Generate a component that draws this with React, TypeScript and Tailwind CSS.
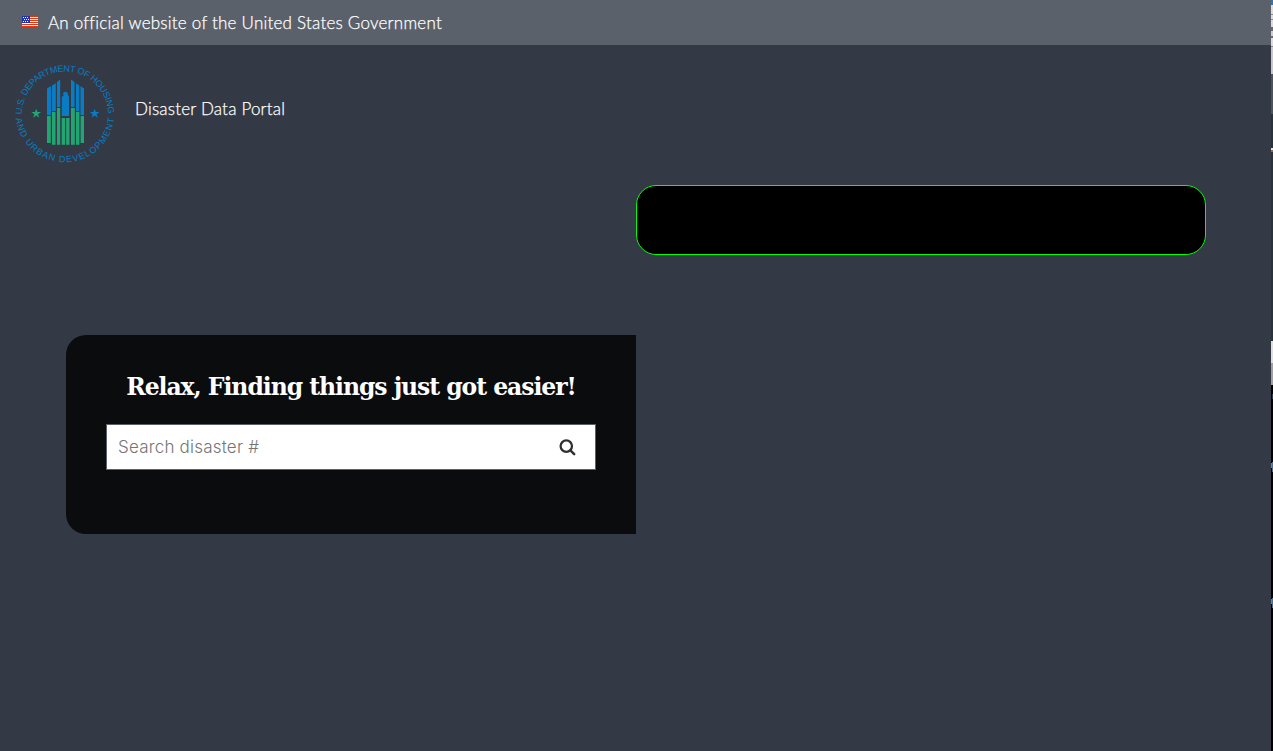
import React from "react";

const BLUE = "#0a7cc4";
const GREEN = "#21a573";
const STAR = "M0 -5 L1.25 -1.5 L5 -1.5 L2 0.7 L3.1 4.3 L0 2.1 L-3.1 4.3 L-2 0.7 L-5 -1.5 L-1.25 -1.5 Z";

function Flag() {
  return (
    <svg width="16" height="11" viewBox="0 0 16 11" shapeRendering="crispEdges">
      <rect width="16" height="11" fill="#fff" />
      {[0, 2, 4, 6, 8, 10].map((y) => (
        <rect key={y} y={y} width="16" height="1" fill="#e4340f" />
      ))}
      <rect width="8" height="7" fill="#1f35b5" />
      {[
        [1, 1], [3, 1], [5, 1],
        [2, 3], [4, 3], [6, 3],
        [1, 5], [3, 5], [5, 5],
      ].map(([x, y]) => (
        <rect key={`${x}-${y}`} x={x} y={y} width="1" height="1" fill="#fff" />
      ))}
    </svg>
  );
}

function Seal() {
  return (
    <svg width="104" height="104" viewBox="13 62 104 104">
      <defs>
        <path id="ring-top" d="M22 114.5 A43 43 0 0 1 108 114.5" />
        <path id="ring-bottom" d="M15.9 118.3 A49.4 49.4 0 0 0 114.1 118.3" />
      </defs>
      <g fill={BLUE} fontFamily="Liberation Sans, Arial, sans-serif" fontSize="9">
        <text textLength="134" lengthAdjust="spacing">
          <textPath href="#ring-top" textLength="134">U.S. DEPARTMENT OF HOUSING</textPath>
        </text>
        <text textLength="144" lengthAdjust="spacing">
          <textPath href="#ring-bottom" textLength="144">AND URBAN DEVELOPMENT</textPath>
        </text>
      </g>
      <g fill={BLUE}>
        <path d="M47 88.5 L51 86 V115 H47 Z" />
        <path d="M52 85.5 L55.8 83.3 V111 H52 Z" />
        <path d="M57 82 L60.2 79.5 V107 H57 Z" />
        <path d="M71 79.5 L74.5 82 V107 H71 Z" />
        <path d="M76 83.3 L79.3 85.5 V111 H76 Z" />
        <path d="M80.5 86 L84 88.5 V115 H80.5 Z" />
        <path d="M61.8 116 V97 L64.2 94.8 L62.8 94.4 C63 92.5 64.3 91.7 65.6 91.8 C67.2 92 67.8 93.4 68 95 L69 97 V116 Z" />
      </g>
      <g fill={GREEN}>
        <rect x="47" y="116" width="3.8" height="27" />
        <rect x="52" y="112" width="3.5" height="32.8" />
        <rect x="57" y="108" width="3.2" height="36.8" />
        <rect x="61.7" y="118" width="3.4" height="26.8" />
        <rect x="66.1" y="118" width="3.4" height="26.8" />
        <rect x="71" y="108" width="3.8" height="36.8" />
        <rect x="76" y="112" width="3.4" height="32.8" />
        <rect x="80.6" y="116" width="3.4" height="27" />
        <path d={STAR} transform="translate(36.2 113.5) scale(.96)" />
      </g>
      <path d={STAR} transform="translate(94.6 113.5) scale(.96)" fill={BLUE} />
    </svg>
  );
}

function EdgeStrip() {
  return (
    <div className="flex w-[2px] shrink-0 flex-col bg-black">
      <div className="h-[5px] bg-[#2f74b5]" />
      <div className="h-[9px] bg-[#dcdcdc]" />
      <div className="h-px bg-[#8c8c8c]" />
      <div className="h-[4px] bg-[#dcdcdc]" />
      <div className="h-px bg-[#8c8c8c]" />
      <div className="h-[7px] bg-[#dcdcdc]" />
      <div className="h-[4px] bg-[#6a6a6a]" />
      <div className="h-[5px] bg-[#cfcfcf]" />
      <div className="h-[2px] bg-[#6a6a6a]" />
      <div className="h-[8px] bg-[#dcdcdc]" />
      <div className="h-px bg-[#8c8c8c]" />
      <div className="h-[27px] bg-[#c8c8c8]" />
      <div className="h-[40px] bg-[#4e535a]" />
      <div className="h-[34px] bg-[#29323a]" />
      <div className="h-[2px] bg-[#e0e4e2]" />
      <div className="h-[2px] bg-[#99684b]" />
      <div className="h-[189px] bg-[#29323a]" />
      <div className="h-[22px] bg-[#dedede]" />
      <div className="h-[22px] bg-[#a3a09f]" />
      <div className="mt-[9px] ml-px h-[5px] bg-[#223c4d]" />
      <div className="mt-[63px] flex h-[10px]">
        <div className="mt-px h-[5px] w-px bg-[#927a62]" />
        <div className="w-px bg-[#456f92]" />
      </div>
      <div className="mt-[126px] flex h-[10px]">
        <div className="mt-px h-[5px] w-px bg-[#927a62]" />
        <div className="w-px bg-[#456f92]" />
      </div>
    </div>
  );
}

export default function App() {
  return (
    <div className="flex h-[751px] w-[1273px] overflow-hidden bg-[#333a46]">
      <div className="flex min-w-0 flex-1 flex-col">
        <div className="flex h-[45px] shrink-0 items-center bg-[#5b616a] pl-[22px] font-[Lato,sans-serif] text-[17px] font-light text-white">
          <div className="-mt-[2px]"><Flag /></div>
          <span className="ml-[10px] whitespace-nowrap leading-[24px] tracking-[0.23px] [-webkit-text-stroke:0.25px_white]">An official website of the United States Government</span>
        </div>
        <header className="flex h-[140px] shrink-0 pt-[17px] pl-[13px]">
          <Seal />
          <span className="mt-[35px] ml-[18px] whitespace-nowrap font-[Lato,sans-serif] text-[17px] leading-[24px] font-light tracking-[0.2px] text-white [-webkit-text-stroke:0.25px_white]">Disaster Data Portal</span>
        </header>
        <main className="grid w-[1206px] grid-cols-[570px_570px] pl-[66px]">
          <section className="mt-[150px] h-[199px] rounded-l-[20px] bg-[#0a0c0e] px-[40px] pt-[36px]">
            <h1 className="h-[32px] whitespace-nowrap text-center font-['DejaVu_Serif',serif] text-[23.5px] leading-[32px] font-bold tracking-[-1.05px] text-white">Relax, Finding things just got easier!</h1>
            <div className="mt-[21px] flex h-[46px] items-center border border-[#5b616a] bg-white pr-[19px] pl-[11px]">
              <input
                className="min-w-0 flex-1 bg-transparent pt-px font-[Inter,sans-serif] text-[17px] font-light tracking-[0.2px] text-[#212121] outline-none placeholder:text-[#757575]"
                placeholder="Search disaster #"
              />
              <button aria-label="Search">
                <svg width="17" height="17" viewBox="0 0 17 17" fill="none" stroke="#303030">
                  <circle cx="7.3" cy="7.1" r="5.7" strokeWidth="2.3" />
                  <path d="M11.4 11.4 L15.2 15.1" strokeWidth="2.5" strokeLinecap="round" />
                </svg>
              </button>
            </div>
          </section>
          <section className="h-[70px] rounded-[20px] border border-[#00ff00] bg-black" />
        </main>
      </div>
      <EdgeStrip />
    </div>
  );
}
